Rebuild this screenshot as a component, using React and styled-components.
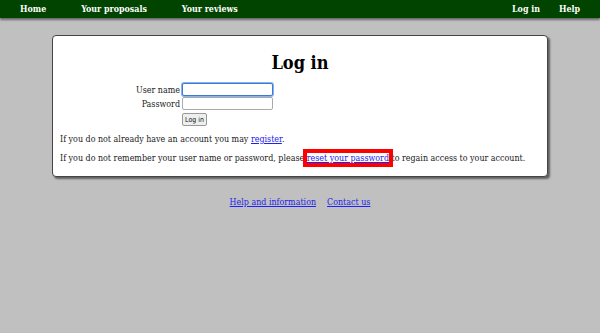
import React from "react";
import styled, { createGlobalStyle } from "styled-components";

const Global = createGlobalStyle`
  html, body { margin: 0; padding: 0; }
  body {
    background: #c0c0c0;
    font-family: "DejaVu Serif Condensed", "DejaVu Serif", serif;
    font-stretch: condensed;
    font-size: 8.85px;
    color: #222;
    width: 600px;
    height: 333px;
    overflow: hidden;
  }
`;

const NavBar = styled.nav`
  height: 18px;
  background: #004400;
  display: flex;
  align-items: center;
  padding: 0 20px;
  box-shadow: 0 2px 2px rgba(0,0,0,0.45);
  position: relative;
`;

const NavGroup = styled.div`
  display: flex;
  gap: ${p => p.gap || 35}px;
  margin-left: ${p => (p.right ? "auto" : "0")};
`;

const NavLink = styled.a`
  color: #fff;
  font-weight: bold;
  font-size: 8.8px;
  text-decoration: none;
`;

const Card = styled.main`
  margin: 17px 52px 0 52px;
  background: #fff;
  border: 1px solid #444;
  border-radius: 4px;
  box-shadow: 2px 2px 2px rgba(0,0,0,0.5);
  padding: 16px 7px 12px;
`;

const Title = styled.h1`
  margin: 0 0 10px;
  text-align: center;
  font-size: 18px;
  font-weight: bold;
  color: #000;
`;

const Form = styled.form`
  display: grid;
  grid-template-columns: 120px auto;
  column-gap: 2px;
  row-gap: 1px;
  align-items: center;
  justify-content: start;
`;

const Label = styled.label`
  text-align: right;
`;

const Input = styled.input`
  width: 91px;
  height: 13px;
  box-sizing: border-box;
  border: 1px solid ${p => (p.focused ? "#3b7bd6" : "#aaa")};
  border-radius: 2px;
  padding: 0 2px;
  margin: 0;
  font-size: 8px;
  ${p => p.focused && "box-shadow: 0 0 0 1px #8ab4ee;"}
`;

const Button = styled.button`
  grid-column: 2;
  justify-self: start;
  margin-top: 2px;
  font-family: "DejaVu Sans Condensed", "DejaVu Sans", sans-serif;
  font-stretch: condensed;
  font-size: 7px;
  height: 13px;
  padding: 0 2px;
  background: #eee;
  border: 1px solid #999;
  border-radius: 2px;
  color: #111;
`;

const Para = styled.p`
  margin: ${p => p.top || 8}px 0 0;
  line-height: 11px;
`;

const Link = styled.a`
  color: #2222ee;
  text-decoration: underline;
  ${p => p.highlight && "outline: 4px solid #ff0000; outline-offset: 0;"}
`;

const Footer = styled.footer`
  display: flex;
  justify-content: center;
  gap: 11px;
  margin-top: 20px;
`;

export default function App() {
  return (
    <>
      <Global />
      <NavBar>
        <NavGroup gap={35}>
          <NavLink href="#">Home</NavLink>
          <NavLink href="#">Your proposals</NavLink>
          <NavLink href="#">Your reviews</NavLink>
        </NavGroup>
        <NavGroup right gap={19}>
          <NavLink href="#">Log in</NavLink>
          <NavLink href="#">Help</NavLink>
        </NavGroup>
      </NavBar>
      <Card>
        <Title>Log in</Title>
        <Form onSubmit={e => e.preventDefault()}>
          <Label>User name</Label>
          <Input focused />
          <Label>Password</Label>
          <Input type="password" />
          <Button type="submit">Log in</Button>
        </Form>
        <Para top={8}>
          If you do not already have an account you may <Link href="#">register</Link>.
        </Para>
        <Para top={8}>
          If you do not remember your user name or password, please{" "}
          <Link href="#" highlight>reset your password</Link> to regain access to your account.
        </Para>
      </Card>
      <Footer>
        <Link href="#">Help and information</Link>
        <Link href="#">Contact us</Link>
      </Footer>
    </>
  );
}
